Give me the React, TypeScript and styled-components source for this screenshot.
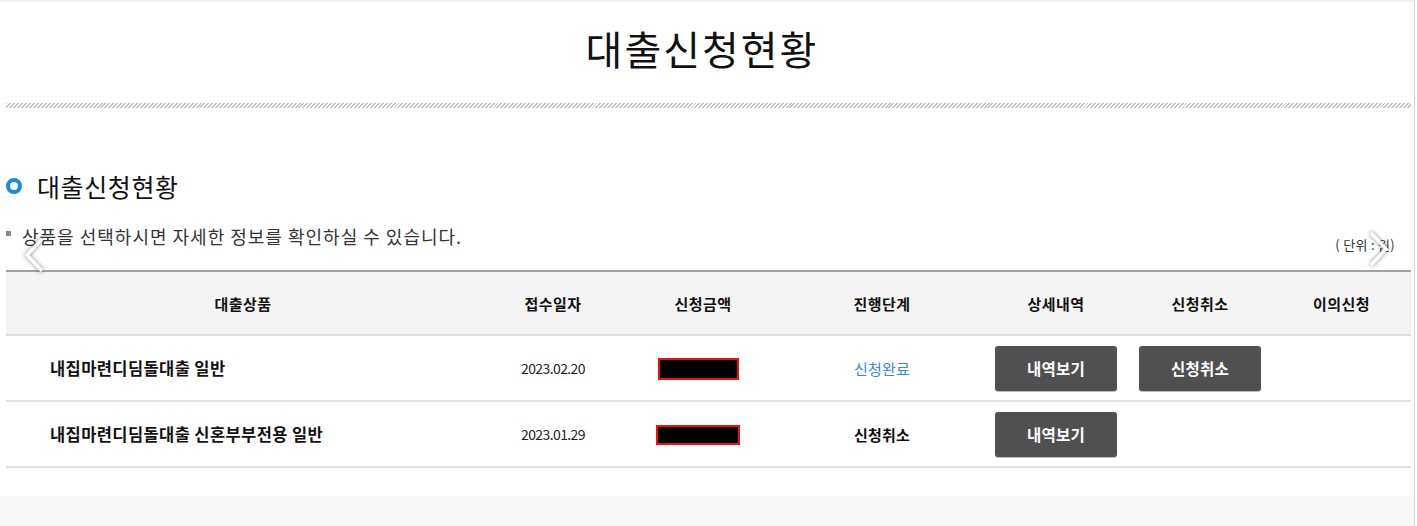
import React from "react";
import styled, { createGlobalStyle } from "styled-components";

const GlobalStyle = createGlobalStyle`
  html, body {
    margin: 0;
    padding: 0;
    background: #ffffff;
  }
  body {
    font-family: "Noto Sans CJK KR", "Noto Sans", sans-serif;
    color: #111;
  }
`;

type Loan = {
  name: string;
  date: string;
  box: [number, number];
  status: string;
  done: boolean;
  cancel: boolean;
};

const loans: Loan[] = [
  { name: "내집마련디딤돌대출 일반", date: "2023.02.20", box: [81, 22], status: "신청완료", done: true, cancel: true },
  { name: "내집마련디딤돌대출 신혼부부전용 일반", date: "2023.01.29", box: [84, 20], status: "신청취소", done: false, cancel: false },
];

const columns = [
  { label: "대출상품", width: 474 },
  { label: "접수일자", width: 146 },
  { label: "신청금액", width: 154 },
  { label: "진행단계", width: 204 },
  { label: "상세내역", width: 144 },
  { label: "신청취소", width: 144 },
  { label: "이의신청", width: 139 },
];

const App = () => {
  return (
    <>
      <GlobalStyle />
      <Page>
        <TopStrip />
        <PageTitle>대출신청현황</PageTitle>
        <Hatch />

        <Section>
          <SectionHead>
            <Ring />
            <h2>대출신청현황</h2>
          </SectionHead>

          <NoticeRow>
            <Notice>상품을 선택하시면 자세한 정보를 확인하실 수 있습니다.</Notice>
            <Unit>( 단위 : 원)</Unit>
          </NoticeRow>

          <Table>
            <colgroup>
              {columns.map((c) => (
                <col key={c.label} style={{ width: c.width }} />
              ))}
            </colgroup>
            <thead>
              <tr>
                {columns.map((c) => (
                  <Th key={c.label}>{c.label}</Th>
                ))}
              </tr>
            </thead>
            <tbody>
              {loans.map((l) => (
                <tr key={l.date}>
                  <NameCell>{l.name}</NameCell>
                  <DateCell>{l.date}</DateCell>
                  <AmountCell>
                    <Redacted style={{ width: l.box[0], height: l.box[1] }} />
                  </AmountCell>
                  <StatusCell $done={l.done}>{l.status}</StatusCell>
                  <Td>
                    <Button>내역보기</Button>
                  </Td>
                  <Td>{l.cancel && <Button>신청취소</Button>}</Td>
                  <Td />
                </tr>
              ))}
            </tbody>
          </Table>
        </Section>

        {/* slider arrows sitting over the content */}
        <Arrow $side="left">
          <svg width="24" height="38" viewBox="0 0 24 38">
            <polyline points="20,3 5,19 20,35" />
          </svg>
        </Arrow>
        <Arrow $side="right">
          <svg width="24" height="38" viewBox="0 0 24 38">
            <polyline points="4,3 19,19 4,35" />
          </svg>
        </Arrow>

        <Footer />
      </Page>
    </>
  );
};

export default App;

const Page = styled.div`
  width: 1414px;
  border-right: 1px solid #d6d6d6;
  position: relative;
`;

const TopStrip = styled.div`
  height: 2px;
  background: #f3f3f3;
`;

const PageTitle = styled.h1`
  margin: 0;
  padding: 23px 10px 0 0;
  height: 78px;
  text-align: center;
  font-size: 40px;
  line-height: 46px;
  font-weight: 400;
  letter-spacing: 2px;
  color: #111;
`;

const Hatch = styled.div`
  height: 5px;
  margin: 0 3px 0 6px;
  background: repeating-linear-gradient(
    135deg,
    #c2c2c2 0px,
    #c2c2c2 1.4px,
    transparent 1.4px,
    transparent 2.8px
  );
`;

const Section = styled.div`
  padding: 62px 3px 28px 6px;
`;

const SectionHead = styled.div`
  display: flex;
  align-items: center;
  gap: 15px;
  height: 32px;

  h2 {
    margin: 0;
    font-size: 25px;
    line-height: 32px;
    font-weight: 400;
    letter-spacing: 0.6px;
    color: #111;
  }
`;

const Ring = styled.span`
  width: 16px;
  height: 16px;
  box-sizing: border-box;
  border-radius: 50%;
  border: 4px solid #1a8bd6;
  background: #fff;
`;

const NoticeRow = styled.div`
  margin-top: 22px;
  display: flex;
  justify-content: space-between;
  align-items: flex-start;
  height: 29px;
  margin-bottom: 17px;
`;

const Notice = styled.p`
  margin: 0;
  position: relative;
  padding-left: 16px;
  font-size: 18px;
  line-height: 24px;
  letter-spacing: 1px;
  color: #333;

  &::before {
    content: "";
    position: absolute;
    left: 0;
    top: 7px;
    width: 5px;
    height: 5px;
    background: #8a8a8a;
  }
`;

const Unit = styled.span`
  margin-top: 13px;
  margin-right: 16px;
  font-size: 13px;
  line-height: 16px;
  letter-spacing: 0.3px;
  color: #333;
`;

const Table = styled.table`
  width: 1405px;
  table-layout: fixed;
  border-collapse: collapse;
  border-top: 2px solid #a2a2a2;
`;

const Th = styled.th`
  height: 62px;
  padding: 0;
  background: #f4f4f4;
  border-bottom: 2px solid #dedede;
  font-size: 15px;
  font-weight: 700;
  letter-spacing: 0.5px;
  color: #111;
  text-align: center;
`;

const Td = styled.td`
  height: 64px;
  padding: 0;
  border-bottom: 2px solid #e0e0e0;
  text-align: center;
  vertical-align: middle;
  font-size: 14px;
  color: #111;
`;

const NameCell = styled(Td)`
  text-align: left;
  padding-left: 44px;
  font-size: 16.5px;
  font-weight: 700;
  letter-spacing: 0.4px;
`;

const DateCell = styled(Td)`
  font-size: 14px;
  letter-spacing: -0.6px;
  color: #222;
`;

const AmountCell = styled(Td)`
  padding-right: 10px;
`;

const StatusCell = styled(Td)<{ $done: boolean }>`
  font-size: 15px;
  font-weight: ${(p) => (p.$done ? 400 : 700)};
  letter-spacing: 0.2px;
  color: ${(p) => (p.$done ? "#3d87d8" : "#111")};
`;

const Redacted = styled.span`
  display: inline-block;
  vertical-align: middle;
  box-sizing: border-box;
  background: #000;
  border: 2px solid #f01010;
`;

const Button = styled.button`
  width: 122px;
  height: 45px;
  border: none;
  border-radius: 3px;
  background: #505050;
  color: #fff;
  font-family: inherit;
  font-size: 15.5px;
  font-weight: 700;
  letter-spacing: 0.3px;
  cursor: pointer;
  vertical-align: middle;
  box-shadow: 0 1px 0 #bdbdbd;
`;

const Arrow = styled.span<{ $side: "left" | "right" }>`
  position: absolute;
  ${(p) => (p.$side === "left" ? "left: 22px; top: 236px;" : "left: 1367px; top: 230px;")}
  filter: drop-shadow(0 0 2px rgba(0, 0, 0, 0.5));

  polyline {
    fill: none;
    stroke: #ffffff;
    stroke-width: 3.5;
  }
`;

const Footer = styled.div`
  height: 30px;
  background: #f7f7f7;
`;
